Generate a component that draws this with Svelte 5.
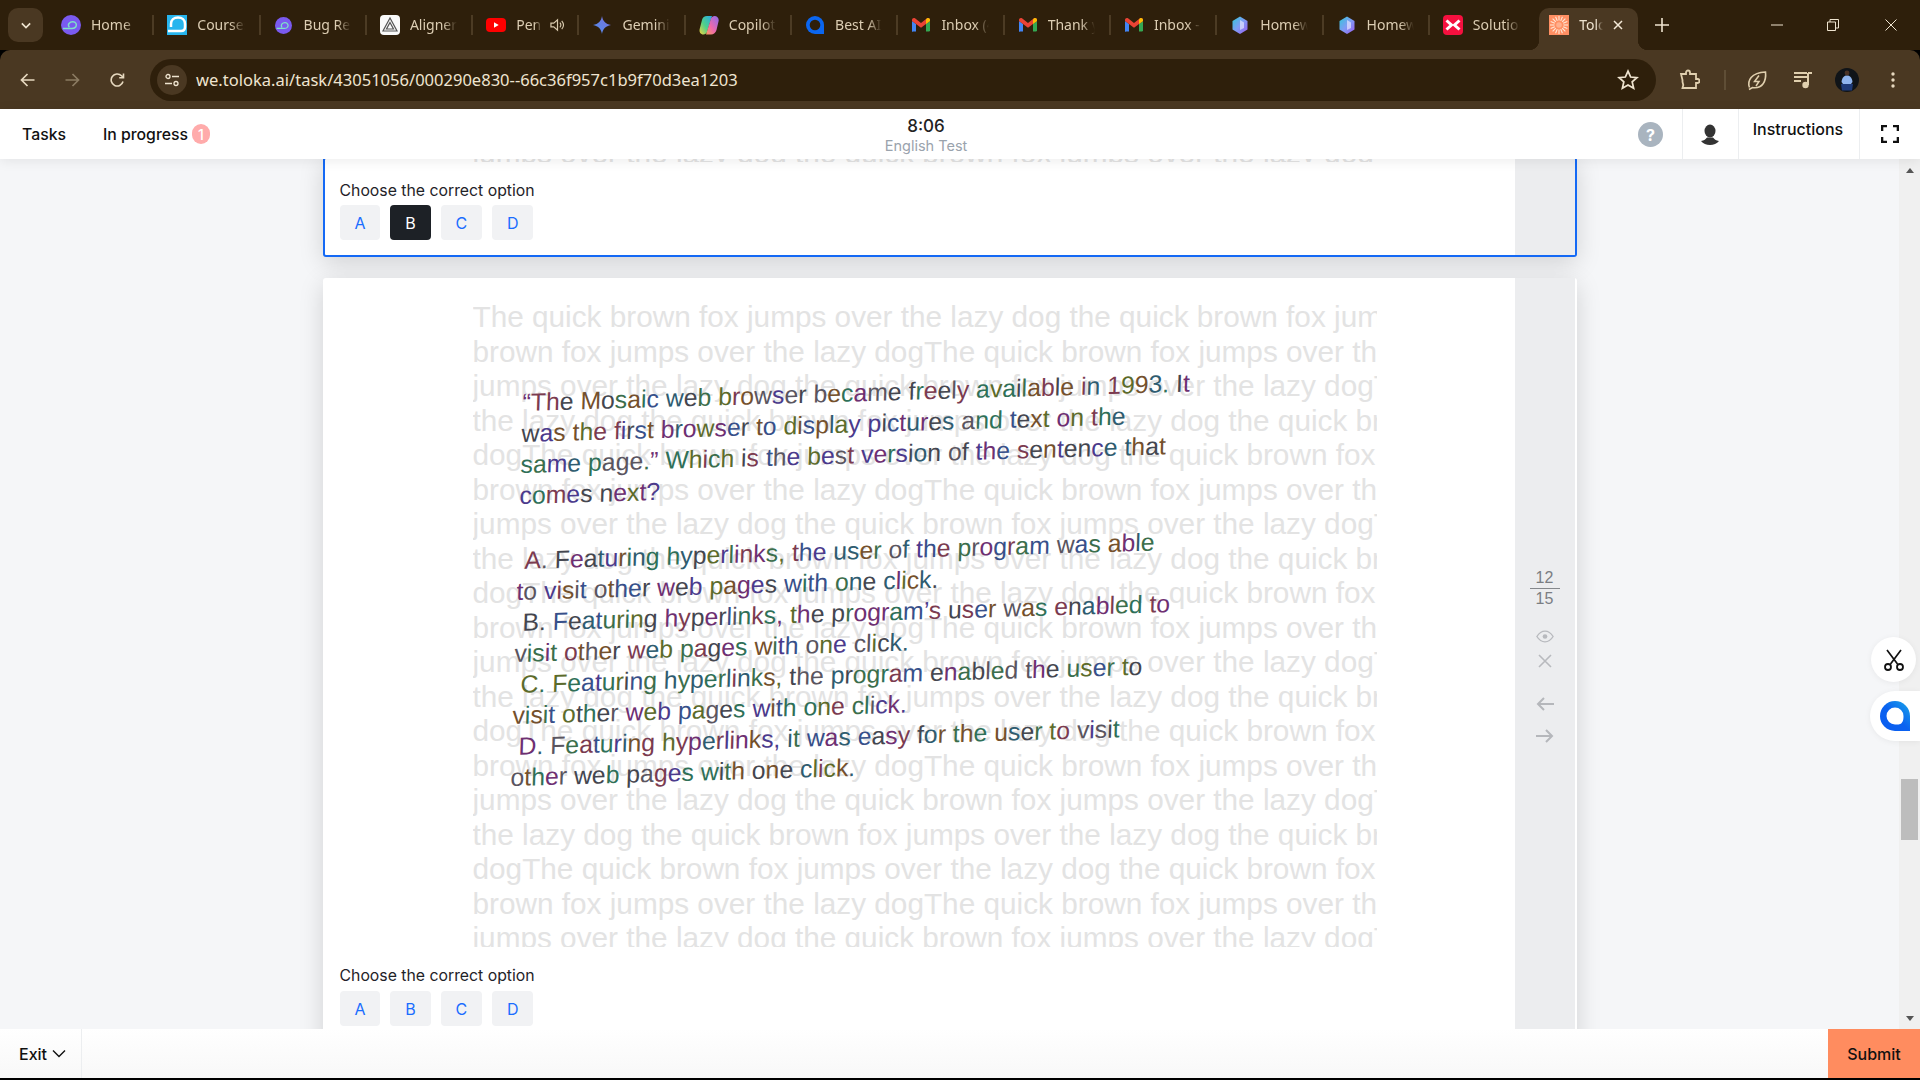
<script>
  const tabs = [
    { icon: 'home', title: 'Home | Toloka' },
    { icon: 'course', title: 'Courses' },
    { icon: 'home', small: true, title: 'Bug Report' },
    { icon: 'aligner', title: 'Aligner AI' },
    { icon: 'youtube', title: 'Pen Beat', audio: true },
    { icon: 'gemini', title: 'Gemini' },
    { icon: 'copilot', title: 'Copilot' },
    { icon: 'ring', title: 'Best AI tools' },
    { icon: 'gmail', title: 'Inbox (4) mail' },
    { icon: 'gmail', title: 'Thank you' },
    { icon: 'gmail', title: 'Inbox - mail' },
    { icon: 'gem', title: 'Homework' },
    { icon: 'gem', title: 'Homework' },
    { icon: 'solution', title: 'Solution' }
  ];

  const options = ['A', 'B', 'C', 'D'];

  const a = 'The quick brown fox jumps over the lazy dog the quick brown fox jumps';
  const rest = [
    'brown fox jumps over the lazy dogThe quick brown fox jumps over the lazy',
    'jumps over the lazy dog the quick brown fox jumps over the lazy dogThe',
    'the lazy dog the quick brown fox jumps over the lazy dog the quick brown',
    'dogThe quick brown fox jumps over the lazy dog the quick brown fox jumps'
  ];
  const noise = [a];
  for (let i = 0; i < 18; i++) noise.push(rest[i % 4]);

  // letters of the captcha-ish question get their own muted colour
  const palette = ['#3b6e4c', '#4b3a8c', '#7b3b50', '#2f5c70', '#5c6b2b', '#74502c', '#44464f', '#6e3072', '#2f7058', '#5a555f', '#37508a'];
  let seed = 17;
  function paint(text) {
    return [...text].map((ch) => {
      seed = (seed * 137 + 59) % 1009;
      return { ch, color: palette[seed % palette.length] };
    });
  }

  const question = [
    { text: '“The Mosaic web browser became freely available in 1993. It' },
    { text: 'was the first browser to display pictures and text on the' },
    { text: 'same page.” Which is the best version of the sentence that' },
    { text: 'comes next?' },
    { text: 'A. Featuring hyperlinks, the user of the program was able', start: true, first: true },
    { text: 'to visit other web pages with one click.' },
    { text: 'B. Featuring hyperlinks, the program’s user was enabled to', start: true },
    { text: 'visit other web pages with one click.' },
    { text: 'C. Featuring hyperlinks, the program enabled the user to', start: true },
    { text: 'visit other web pages with one click.' },
    { text: 'D. Featuring hyperlinks, it was easy for the user to visit', start: true },
    { text: 'other web pages with one click.' }
  ].map((l) => ({ ...l, letters: paint(l.text) }));

  const rays = Array.from({ length: 16 }, (_, i) => i * 22.5);
</script>

{#snippet favicon(kind, small)}
  {#if kind === 'home'}
    <svg class="fav" viewBox="0 0 20 20" class:small>
      <circle cx="10" cy="10" r="10" fill="#7a5af0" />
      <path d="M2 13.5h9c4 0 5-3 4-5-1.200-2.200-5-2.500-7 0-1 1.500-.5 3 .5 3.500" fill="none" stroke="#7fe3c8" stroke-width="1.500" />
    </svg>
  {:else if kind === 'course'}
    <svg class="fav" viewBox="0 0 20 20">
      <rect width="20" height="20" fill="#27b5ee" />
      <path d="M1 16h13c3 0 4-2 4-4V9c0-4-3-6.500-7-6.500S4 5 4 9v3" fill="none" stroke="#fff" stroke-width="2.500" />
    </svg>
  {:else if kind === 'aligner'}
    <svg class="fav" viewBox="0 0 20 20">
      <rect width="20" height="20" rx="4" fill="#fafafa" />
      <path d="M10 3 3 16h14L10 3Zm0 4.500L13.500 14h-7L10 7.500Z" fill="none" stroke="#555" stroke-width="1.200" />
    </svg>
  {:else if kind === 'youtube'}
    <svg class="fav" viewBox="0 0 20 20">
      <rect y="3" width="20" height="14" rx="4" fill="#f00" />
      <path d="M8 7.300v5.400l4.700-2.700z" fill="#fff" />
    </svg>
  {:else if kind === 'gemini'}
    <svg class="fav" viewBox="0 0 20 20">
      <defs><linearGradient id="gem-star" x1="0" y1="1" x2="1" y2="0"><stop offset="0" stop-color="#4f8ff0" /><stop offset="1" stop-color="#7a6fd8" /></linearGradient></defs>
      <path d="M10 1c.8 5 3.500 8 9 9-5.500 1-8.200 4-9 9-.8-5-3.500-8-9-9 5.500-1 8.200-4 9-9Z" fill="url(#gem-star)" />
    </svg>
  {:else if kind === 'copilot'}
    <svg class="fav" viewBox="0 0 20 20">
      <defs>
        <linearGradient id="cop-a" x1="1" y1="0" x2="0" y2="1"><stop offset="0" stop-color="#27a8e8" /><stop offset=".55" stop-color="#4fd08a" /><stop offset="1" stop-color="#f2d23c" /></linearGradient>
        <linearGradient id="cop-b" x1="1" y1="0" x2="0" y2="1"><stop offset="0" stop-color="#8a6cf0" /><stop offset=".6" stop-color="#f06aa8" /><stop offset="1" stop-color="#f8a060" /></linearGradient>
      </defs>
      <path d="M8 1h5L8 17c-.5 1.500-2 2.500-3.500 2.500C1.500 19.500 0 17 .7 14L3 5c.6-2.500 2.500-4 5-4Z" fill="url(#cop-a)" />
      <path d="M12 19.500H7l5-16C12.500 2 14 1 15.500 1c3 0 4.800 2.500 4 5.500L17.500 15c-.6 2.500-3 4.500-5.500 4.500Z" fill="url(#cop-b)" />
    </svg>
  {:else if kind === 'ring'}
    <svg class="fav" viewBox="0 0 20 20">
      <path d="M10 1a9 9 0 1 0 0 18h9v-9a9 9 0 0 0-9-9Z" fill="#0b66f0" />
      <circle cx="10" cy="10" r="5.300" fill="#2e1f0b" />
    </svg>
  {:else if kind === 'gmail'}
    <svg class="fav" viewBox="0 0 20 20">
      <path d="M1 16.500V6l4 3v7.500H2.200A1.200 1.200 0 0 1 1 16.500Z" fill="#4285f4" />
      <path d="M15 16.500V9l4-3v9.300a1.200 1.200 0 0 1-1.200 1.200H15Z" fill="#34a853" />
      <path d="M1 6V4.800c0-1.600 1.800-2.500 3-1.500l6 4.600 6-4.600c1.200-1 3-.1 3 1.500V6l-9 6.700Z" fill="#ea4335" />
      <path d="M15 4.600l1-1.300c1.200-1 3-.1 3 1.500V6l-4 3Z" fill="#fbbc04" />
    </svg>
  {:else if kind === 'gem'}
    <svg class="fav" viewBox="0 0 20 20">
      <defs><linearGradient id="gem-hex" x1="0" y1="0" x2="1" y2="1"><stop offset="0" stop-color="#2fc8d8" /><stop offset=".5" stop-color="#7f9cf5" /><stop offset="1" stop-color="#9a5cf0" /></linearGradient></defs>
      <path d="M10 1.500 17.500 6v8.500L10 19l-7.500-4.500V6Z" fill="url(#gem-hex)" />
      <path d="M10 5l4 2.400v5.500L10 15Z" fill="#e4e4ff" opacity=".7" />
    </svg>
  {:else if kind === 'solution'}
    <svg class="fav" viewBox="0 0 20 20">
      <rect width="20" height="20" rx="4" fill="#f5103f" />
      <path d="M3.500 5.500 8.500 10l-5 4.500M16.500 5.500 11.500 10l5 4.500" fill="none" stroke="#fff" stroke-width="3" />
    </svg>
  {:else if kind === 'toloka'}
    <svg class="fav" viewBox="0 0 20 20">
      <rect width="20" height="20" fill="#ff8f63" />
      {#each rays as r}
        <path d="M10 5.500V1" stroke="#ffe8d8" stroke-width="1.100" transform="rotate({r} 10 10)" />
      {/each}
      <circle cx="10" cy="10" r="2.800" fill="#ffb08e" />
    </svg>
  {/if}
{/snippet}

{#snippet questionCard(selected, current)}
  <section class="card" class:current>
    <div class="body">
      <div class="noise">
        {#each noise as line}
          <div class="noise-line">{line}</div>
        {/each}
        {#if !current}
          <div class="warp">
            {#each question as line}
              <div class="warp-line" class:start={line.start} class:first={line.first}>{#each line.letters as l}<span style="color: {l.color}">{l.ch}</span>{/each}</div>
            {/each}
          </div>
        {/if}
      </div>
      <p class="prompt">Choose the correct option</p>
      <div class="options">
        {#each options as o}
          <button class="option" class:on={o === selected}>{o}</button>
        {/each}
      </div>
    </div>
    <aside class="rail">
      {#if !current}
        <div class="fraction"><span>12</span><span class="under">15</span></div>
        <svg class="rail-icon eye" viewBox="0 0 20 14"><path d="M1 7c2.500-4 5.500-6 9-6s6.500 2 9 6c-2.500 4-5.500 6-9 6S3.500 11 1 7Z" fill="none" stroke="#b8babe" stroke-width="1.500" /><circle cx="10" cy="7" r="2.600" fill="#b8babe" /></svg>
        <svg class="rail-icon cross" viewBox="0 0 14 14"><path d="M1 1l12 12M13 1 1 13" stroke="#b8babe" stroke-width="1.600" /></svg>
        <svg class="rail-icon back" viewBox="0 0 18 14"><path d="M18 7H2M8 1 2 7l6 6" fill="none" stroke="#b5b7bb" stroke-width="2" /></svg>
        <svg class="rail-icon next" viewBox="0 0 18 14"><path d="M0 7h16M10 1l6 6-6 6" fill="none" stroke="#b5b7bb" stroke-width="2" /></svg>
      {/if}
    </aside>
  </section>
{/snippet}

<div class="page">
  <div class="tabstrip">
    <button class="tab-search" aria-label="Search tabs">
      <svg viewBox="0 0 12 8" width="10" height="7"><path d="M1 1.500 6 6.500l5-5" fill="none" stroke="#efe4d0" stroke-width="2" /></svg>
    </button>
    <div class="tabs">
      {#each tabs as t}
        <div class="tab">
          {@render favicon(t.icon, t.small)}
          <span class="tab-title">{t.title}</span>
          {#if t.audio}
            <svg class="speaker" viewBox="0 0 16 14"><path d="M1 5v4h3l4 3.500v-11L4 5Z" fill="none" stroke="#d8c9ae" stroke-width="1.300" /><path d="M10.500 4.500c1.300 1.500 1.300 3.500 0 5M12.500 2.500c2.300 2.700 2.300 6.300 0 9" fill="none" stroke="#d8c9ae" stroke-width="1.200" /></svg>
          {/if}
        </div>
      {/each}
      <div class="tab active">
        {@render favicon('toloka')}
        <span class="tab-title">Toloka</span>
        <svg class="tab-close" viewBox="0 0 10 10"><path d="M1 1l8 8M9 1 1 9" stroke="#f5ead8" stroke-width="1.500" /></svg>
      </div>
    </div>
    <svg class="newtab" viewBox="0 0 14 14"><path d="M7 0v14M0 7h14" stroke="#efe4d0" stroke-width="1.600" /></svg>
    <div class="winctl">
      <svg viewBox="0 0 12 12"><path d="M0 6h12" stroke="#efe4d0" /></svg>
      <svg viewBox="0 0 12 12"><path d="M.5 3h8v8.500h-8zM3 3V.5h8.500V9H8.500" fill="none" stroke="#efe4d0" /></svg>
      <svg viewBox="0 0 12 12"><path d="M.5.500l11 11M11.500.5l-11 11" stroke="#efe4d0" /></svg>
    </div>
  </div>

  <div class="toolbar">
    <div class="nav">
      <svg viewBox="0 0 16 16"><path d="M15 8H2M8 2 2 8l6 6" fill="none" stroke="#e6d8bf" stroke-width="1.700" /></svg>
      <svg viewBox="0 0 16 16"><path d="M1 8h13M8 2l6 6-6 6" fill="none" stroke="#8b7b62" stroke-width="1.700" /></svg>
      <svg viewBox="0 0 16 16"><path d="M13.500 9.500A6 6 0 1 1 12 3.800L14 5.800M14 1.500v4.300H9.700" fill="none" stroke="#e6d8bf" stroke-width="1.600" /></svg>
    </div>
    <div class="omnibox">
      <span class="site-chip">
        <svg viewBox="0 0 16 14" width="16" height="14"><circle cx="4" cy="3.500" r="2" fill="none" stroke="#efe4d0" stroke-width="1.300" /><path d="M8 3.500h7M1 10.500h7" stroke="#efe4d0" stroke-width="1.300" /><circle cx="12" cy="10.500" r="2" fill="none" stroke="#efe4d0" stroke-width="1.300" /></svg>
      </span>
      <span class="url">we.toloka.ai/task/43051056/000290e830--66c36f957c1b9f70d3ea1203</span>
      <svg class="star" viewBox="0 0 20 20"><path d="M10 2l2.400 5.300 5.700.6-4.300 3.800 1.300 5.700L10 14.500l-5.100 2.900 1.300-5.700L1.900 7.900l5.700-.6Z" fill="none" stroke="#efe4d0" stroke-width="1.600" /></svg>
    </div>
    <div class="extensions">
      <svg class="ext" viewBox="0 0 22 22"><path d="M3 5h5V3.500a2 2 0 0 1 4 0V5h6v5h1.500a2 2 0 0 1 0 4H18v5H4.500l.8-3-.8-3V11Z" fill="none" stroke="#e0cfae" stroke-width="1.800" /></svg>
      <span class="ext-sep"></span>
      <svg class="ext" viewBox="0 0 22 22"><path d="M3.500 18.500C1 12 5 3.500 19.500 3c1 9-3 17-13 15.500L3 20.500" fill="none" stroke="#e0cfae" stroke-width="1.600" /><path d="M13 6.500 8.500 12.500h4.500L10 17" fill="none" stroke="#e0cfae" stroke-width="1.500" /></svg>
      <svg class="ext" viewBox="0 0 22 22"><path d="M2 4h13M2 8h13M2 12h7" stroke="#e0cfae" stroke-width="2" /><path d="M16 4h4M16 4v12" stroke="#e0cfae" stroke-width="2" fill="none" /><circle cx="13.500" cy="16" r="3.200" fill="#e0cfae" /></svg>
      <svg class="avatar" viewBox="0 0 24 24">
        <circle cx="12" cy="12" r="12" fill="#101418" />
        <path d="M6.500 14c.5-5 3-6.500 5.500-6.500s5 1.500 5.500 6.500L16 16H8Z" fill="#8fb4ee" />
        <circle cx="12" cy="5" r="2.400" fill="#4a3326" />
        <path d="M6 16h12l-1 6.500H7Z" fill="#1e3a78" />
      </svg>
      <svg class="kebab" viewBox="0 0 4 16"><circle cx="2" cy="2" r="1.700" fill="#e6d8bf" /><circle cx="2" cy="8" r="1.700" fill="#e6d8bf" /><circle cx="2" cy="14" r="1.700" fill="#e6d8bf" /></svg>
    </div>
  </div>

  <header class="topbar">
    <nav class="links">
      <a href="#tasks">Tasks</a>
      <a href="#progress" class="progress">In progress<span class="count">1</span></a>
    </nav>
    <div class="timer">
      <strong>8:06</strong>
      <span>English Test</span>
    </div>
    <div class="top-actions">
      <span class="help">?</span>
      <span class="cell person">
        <svg viewBox="0 0 20 22" width="20" height="22"><ellipse cx="10" cy="7" rx="5.500" ry="6.500" fill="#333" /><path d="M1 17c3-.5 5-2 6-3.500h6c1 1.500 3 3 6 3.500-2 2.500-5.500 4-9 4s-7-1.500-9-4Z" fill="#333" /></svg>
      </span>
      <span class="cell instructions">Instructions</span>
      <span class="cell full">
        <svg viewBox="0 0 18 18" width="18" height="18"><path d="M1 6V1h5M12 1h5v5M17 12v5h-5M6 17H1v-5" fill="none" stroke="#111" stroke-width="2.600" /></svg>
      </span>
    </div>
  </header>

  <div class="workspace">
    <main class="scroller">
      {@render questionCard('B', true)}
      {@render questionCard(null, false)}
    </main>
    <div class="scrollbar">
      <span class="arrow up"></span>
      <div class="track"><span class="thumb"></span></div>
      <span class="arrow down"></span>
    </div>
    <button class="float scissors" aria-label="Screenshot">
      <svg viewBox="0 0 24 24" width="24" height="24"><path d="M5 2l10.500 14M19 2 8.500 16" stroke="#111" stroke-width="1.700" /><circle cx="6" cy="19" r="3" fill="none" stroke="#111" stroke-width="1.800" /><circle cx="18" cy="19" r="3" fill="none" stroke="#111" stroke-width="1.800" /></svg>
    </button>
    <button class="float chat" aria-label="Chat">
      <svg viewBox="0 0 30 30" width="30" height="30">
        <defs><linearGradient id="chat-ring" x1="1" y1="0" x2="0" y2="1"><stop offset="0" stop-color="#1aa7e8" /><stop offset=".5" stop-color="#0a62f0" /><stop offset="1" stop-color="#0a5cf0" /></linearGradient></defs>
        <path d="M15 0a15 15 0 1 0 0 30h15V15A15 15 0 0 0 15 0Z" fill="url(#chat-ring)" />
        <path d="M15 6.500a8.500 8.500 0 1 0 0 17c4 0 5.500 0 7-2 1.300-1.700 1.500-3.500 1.500-6.500A8.500 8.500 0 0 0 15 6.500Z" fill="#fff" />
      </svg>
    </button>
  </div>

  <footer class="bottombar">
    <button class="exit">Exit
      <svg viewBox="0 0 14 9" width="14" height="9"><path d="M1 1.500 7 7.500l6-6" fill="none" stroke="#111" stroke-width="1.400" /></svg>
    </button>
    <button class="submit">Submit</button>
  </footer>
</div>

<style>
  :global(body) {
    margin: 0;
    background: #000;
  }

  .page {
    width: 1920px;
    height: 1080px;
    display: flex;
    flex-direction: column;
    overflow: hidden;
    position: relative;
    font-family: Inter, "Liberation Sans", sans-serif;
    background: #000;
  }

  button {
    border: 0;
    background: none;
    padding: 0;
    font: inherit;
  }

  /* browser chrome */
  .tabstrip {
    height: 50px;
    flex: none;
    display: flex;
    align-items: center;
    background: #2e1f0b;
    font-family: "Noto Sans", sans-serif;
  }

  .tab-search {
    width: 35px;
    height: 34px;
    margin: 0 5px 0 8px;
    border-radius: 10px;
    background: #4a3822;
    display: flex;
    align-items: center;
    justify-content: center;
  }

  .tabs {
    display: flex;
    align-self: stretch;
  }

  .tab {
    width: 106.300px;
    box-sizing: border-box;
    padding-left: 13px;
    display: flex;
    align-items: center;
    gap: 10px;
    position: relative;
  }

  .tab::after {
    content: "";
    position: absolute;
    right: 0;
    top: 15px;
    height: 20px;
    width: 2px;
    background: #4c3b24;
  }

  .tab:nth-last-child(2)::after {
    display: none;
  }

  .fav {
    width: 20px;
    height: 20px;
    flex: none;
  }

  .fav.small {
    width: 17px;
    height: 17px;
    margin: 0 1.500px;
  }

  .tab-title {
    flex: 1;
    min-width: 0;
    margin-right: 16px;
    overflow: hidden;
    white-space: nowrap;
    font-size: 14px;
    line-height: 20px;
    margin-top: -1px;
    color: #dccdb3;
    -webkit-mask-image: linear-gradient(to right, #000 70%, transparent 100%);
    mask-image: linear-gradient(to right, #000 70%, transparent 100%);
  }

  .speaker {
    width: 15px;
    height: 14px;
    flex: none;
    margin: 0 14px 0 -18px;
  }

  .tab.active {
    width: 99px;
    margin-left: 3px;
    padding: 0 0 8px 10px;
    background: #4a3822;
    margin-top: 8px;
    border-radius: 10px 10px 0 0;
    gap: 10px;
  }

  /* the little inverted corners where the active tab meets the toolbar */
  .tab.active::before,
  .tab.active::after {
    content: "";
    display: block;
    position: absolute;
    top: auto;
    bottom: 0;
    width: 10px;
    height: 10px;
    background: radial-gradient(circle at 0 0, transparent 10px, #4a3822 10.500px);
  }

  .tab.active::before {
    left: -10px;
  }

  .tab.active::after {
    right: -10px;
    background: radial-gradient(circle at 100% 0, transparent 10px, #4a3822 10.500px);
  }

  .tab.active .tab-title {
    margin-right: 0;
    color: #efe4d0;
  }

  .tab-close {
    width: 10px;
    height: 10px;
    flex: none;
    margin-right: 15px;
  }

  .newtab {
    width: 14px;
    height: 14px;
    margin-left: 17px;
    flex: none;
  }

  .winctl {
    margin-left: auto;
    display: flex;
    align-items: center;
  }

  .winctl svg {
    width: 12px;
    height: 12px;
    padding: 0 22px;
  }

  .winctl svg:last-child {
    padding: 0 23px 0 24px;
  }

  .toolbar {
    height: 59px;
    flex: none;
    display: flex;
    align-items: center;
    background: #4a3822;
    border-radius: 10px 10px 0 0;
  }

  .nav {
    width: 150px;
    flex: none;
    padding-left: 5px;
    box-sizing: border-box;
    display: flex;
  }

  .nav svg {
    width: 16px;
    height: 16px;
    padding: 0 14.500px;
  }

  .omnibox {
    width: 1506px;
    height: 42px;
    flex: none;
    box-sizing: border-box;
    border-radius: 21px;
    background: #2e1f0b;
    padding: 0 17px 0 7px;
    display: flex;
    align-items: center;
    font-family: "Noto Sans", sans-serif;
  }

  .site-chip {
    width: 30px;
    height: 30px;
    border-radius: 50%;
    background: #4a3822;
    display: flex;
    align-items: center;
    justify-content: center;
    flex: none;
  }

  .url {
    margin-left: 9px;
    font-size: 16.550px;
    color: #efe4d0;
    white-space: nowrap;
  }

  .star {
    margin-left: auto;
    width: 22px;
    height: 22px;
  }

  .extensions {
    flex: 1;
    display: flex;
    align-items: center;
    padding-left: 22px;
  }

  .ext {
    width: 22px;
    height: 22px;
    flex: none;
  }

  .ext-sep {
    width: 2px;
    height: 20px;
    background: #5f4e36;
    margin: 0 20px 0 24px;
  }

  .ext + .ext {
    margin-left: 24px;
  }

  .avatar {
    width: 24px;
    height: 24px;
    margin-left: 21px;
    flex: none;
  }

  .kebab {
    width: 4px;
    height: 16px;
    margin-left: 32px;
    flex: none;
  }

  /* task header */
  .topbar {
    height: 50px;
    flex: none;
    display: grid;
    grid-template-columns: 860px 132px 1fr;
    background: #fff;
    box-shadow: 0 2px 12px rgba(0, 0, 0, 0.08);
    position: relative;
    z-index: 2;
    color: #111;
  }

  .links {
    display: flex;
    align-items: center;
    padding-left: 22px;
    gap: 37px;
    font-size: 15.800px;
    font-weight: 500;
  }

  .links a {
    color: #111;
    text-decoration: none;
  }

  .progress {
    display: flex;
    align-items: center;
    gap: 4px;
  }

  .count {
    width: 18px;
    height: 20px;
    border-radius: 10px;
    background: #ffabab;
    color: #fff;
    font-size: 14px;
    display: flex;
    align-items: center;
    justify-content: center;
  }

  .timer {
    display: flex;
    flex-direction: column;
    align-items: center;
    justify-content: center;
    padding-top: 3px;
    line-height: 19px;
  }

  .timer strong {
    font-size: 17px;
    font-weight: 500;
    color: #222;
  }

  .timer span {
    font-size: 14.500px;
    color: #9aa3ad;
  }

  .top-actions {
    display: flex;
    justify-content: flex-end;
    align-items: stretch;
  }

  .help {
    width: 25px;
    height: 25px;
    margin: 13px 19px 0 0;
    border-radius: 50%;
    background: #a9b4bf;
    color: #fff;
    font-size: 16px;
    font-weight: 700;
    display: flex;
    align-items: center;
    justify-content: center;
  }

  .cell {
    border-left: 1px solid #eceef0;
    box-sizing: border-box;
    display: flex;
    align-items: center;
    justify-content: center;
  }

  .person {
    width: 56px;
    padding: 2px 2px 0 0;
  }

  .instructions {
    width: 121px;
    align-items: flex-start;
    padding: 10px 2px 0 0;
    font-size: 16px;
    font-weight: 500;
  }

  .full {
    width: 61px;
  }

  /* scrolled task list */
  .workspace {
    flex: 1;
    min-height: 0;
    display: flex;
    position: relative;
    background: #f5f6f8;
  }

  .scroller {
    flex: 1;
    min-width: 0;
    overflow: hidden;
    display: flex;
    flex-direction: column;
    align-items: center;
    gap: 21px;
  }

  .card {
    width: 1254px;
    flex: none;
    display: flex;
    box-sizing: border-box;
    background: #fff;
    border-radius: 3px;
    box-shadow: 0 6px 24px rgba(0, 0, 0, 0.15);
    height: 770px;
  }

  /* already scrolled past: only the bottom of it is left under the header */
  .card.current {
    height: 100px;
    margin-top: -2px;
    border: 2px solid #1469f5;
    overflow: hidden;
    align-items: flex-end;
  }

  .body {
    flex: 1;
    min-width: 0;
    padding: 22px 0 14px 17px;
  }

  .card.current .body {
    padding: 0 0 15px 15px;
  }

  .card.current .rail {
    align-self: stretch;
    width: 60px;
    margin-right: 0;
    padding-top: 0;
  }

  .noise {
    width: 904px;
    height: 647px;
    margin-left: 133px;
    overflow: hidden;
    position: relative;
  }

  .noise-line {
    height: 34.500px;
    line-height: 34.500px;
    font-family: "Liberation Sans", sans-serif;
    font-size: 29.750px;
    color: #e3e3e3;
    white-space: nowrap;
  }

  .warp {
    position: absolute;
    left: 50px;
    top: 87px;
    font-family: "Liberation Sans", sans-serif;
    font-size: 24.800px;
    line-height: 31px;
    transform: matrix(1, -0.029, -0.032, 1, 0, 0);
    transform-origin: 0 0;
  }

  .warp-line {
    white-space: nowrap;
  }

  .warp-line.start {
    text-indent: 7px;
  }

  .warp-line.first {
    margin-top: 34px;
  }

  .prompt {
    margin: 20px 0 6px;
    font-size: 15.800px;
    line-height: 18px;
    color: #1f2328;
  }

  .card.current .prompt {
    margin-bottom: 5px;
  }

  .options {
    display: flex;
    gap: 10px;
  }

  .option {
    padding: 0 14.900px;
    height: 35px;
    border-radius: 4px;
    background: #f1f2f4;
    color: #1a6dff;
    font-size: 16px;
    display: flex;
    align-items: center;
    justify-content: center;
  }

  .option.on {
    background: #1d2126;
    color: #fff;
  }

  .rail {
    width: 60px;
    flex: none;
    margin-right: 2px;
    background: #ecedef;
    display: flex;
    flex-direction: column;
    align-items: center;
    padding-top: 290px;
    box-sizing: border-box;
  }

  .fraction {
    display: flex;
    flex-direction: column;
    align-items: center;
    width: 30px;
    font-size: 16px;
    line-height: 20px;
    color: #7b7e83;
    font-family: "Liberation Sans", sans-serif;
  }

  .under {
    width: 100%;
    text-align: center;
    border-top: 1px solid #85888c;
  }

  .rail-icon {
    display: block;
    flex: none;
  }

  .eye {
    width: 18px;
    height: 13px;
    margin-top: 21px;
  }

  .cross {
    width: 14px;
    height: 14px;
    margin-top: 11px;
  }

  .back {
    width: 18px;
    height: 14px;
    margin-top: 29px;
  }

  .next {
    width: 18px;
    height: 14px;
    margin-top: 18px;
  }

  .scrollbar {
    width: 21px;
    flex: none;
    background: #f0f0f0;
    display: flex;
    flex-direction: column;
    align-items: center;
    padding: 9px 0 8px;
    box-sizing: border-box;
  }

  .arrow {
    width: 0;
    height: 0;
    border-left: 4.500px solid transparent;
    border-right: 4.500px solid transparent;
  }

  .arrow.up {
    border-bottom: 5px solid #555;
  }

  .arrow.down {
    border-top: 5px solid #555;
  }

  .track {
    flex: 1;
    width: 17px;
    padding-top: 606px;
  }

  .thumb {
    display: block;
    height: 61px;
    background: #bdbdbd;
  }

  .float {
    position: absolute;
    background: #fff;
    display: flex;
    align-items: center;
    justify-content: center;
    box-shadow: 0 1px 6px rgba(0, 0, 0, 0.06);
  }

  .scissors {
    left: 1871px;
    top: 478px;
    width: 45px;
    height: 45px;
    border-radius: 50%;
  }

  .chat {
    left: 1870px;
    top: 532px;
    width: 50px;
    height: 50px;
    border-radius: 25px 0 0 25px;
  }

  /* bottom bar */
  .bottombar {
    height: 49px;
    flex: none;
    margin-bottom: 2px;
    display: flex;
    justify-content: space-between;
    background: linear-gradient(#fff, #f8f8f8);
    position: relative;
    z-index: 2;
  }

  .exit {
    width: 82px;
    border-right: 1px solid #eceef0;
    display: flex;
    align-items: center;
    gap: 5px;
    padding-left: 19px;
    box-sizing: border-box;
    font-size: 16px;
    font-weight: 500;
    color: #111;
  }

  .submit {
    width: 92px;
    background: #ff8c5f;
    font-size: 16px;
    font-weight: 500;
    color: #111;
  }
</style>
